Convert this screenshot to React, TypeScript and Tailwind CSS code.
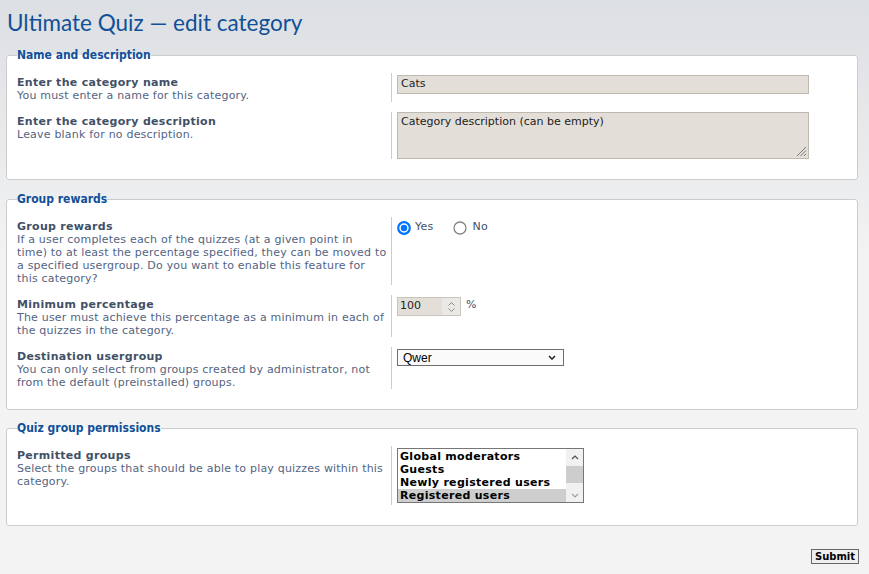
import React from "react";

const body = "font-['DejaVu_Sans',Verdana,sans-serif]";

function Row({
  label,
  lines,
  children,
  dd = "pt-[2px] pb-[2px]",
}: {
  label: string;
  lines: string[];
  children: React.ReactNode;
  dd?: string;
}) {
  return (
    <div className="flex">
      <div className="w-[374px] shrink-0 pt-[3px] text-[11px] leading-[13px] whitespace-nowrap">
        <div className="font-bold tracking-[0.3px] text-[#425067]">{label}</div>
        {lines.map((l, i) => (
          <div key={i} className="tracking-[0.2px] text-[#536482]">
            {l}
          </div>
        ))}
      </div>
      <div className={`flex-1 border-l border-[#cccccc] pl-[5px] ${dd}`}>{children}</div>
    </div>
  );
}

function Fieldset({ legend, children }: { legend: string; children: React.ReactNode }) {
  return (
    <fieldset className="ml-[6px] w-[852px] rounded-[3px] border border-[#cccccc] bg-white px-[10px] pt-[11px] pb-[20px]">
      <legend className="text-[12px] leading-[14px] font-bold text-[#115098] font-['DejaVu_Sans_Condensed','DejaVu_Sans',sans-serif]">
        {legend}
      </legend>
      <div className="flex flex-col gap-[10px]">{children}</div>
    </fieldset>
  );
}

function Radio({ checked }: { checked?: boolean }) {
  return (
    <svg width="14" height="14" viewBox="0 0 14 14" className="shrink-0">
      {checked ? (
        <>
          <circle cx="7" cy="7" r="5.8" fill="white" stroke="#0075ff" strokeWidth="2.2" />
          <circle cx="7" cy="7" r="3.2" fill="#0075ff" />
        </>
      ) : (
        <circle cx="7" cy="7" r="6" fill="white" stroke="#858585" strokeWidth="1.3" />
      )}
    </svg>
  );
}

export default function App() {
  return (
    <div className={`min-h-[574px] w-full bg-[linear-gradient(180deg,#dcdfe3_0px,#f3f3f3_260px)] ${body}`}>
      <h1 className="px-[7px] pt-[9px] text-[22.5px] leading-[27px] text-[#115098] font-['Lato',sans-serif]">
        Ultimate Quiz — edit category
      </h1>

      <div className="mt-[12px]">
        <Fieldset legend="Name and description">
          <Row label="Enter the category name" lines={["You must enter a name for this category."]}>
            <div className="flex h-[19px] w-[412px] items-center border border-[#bdb8b0] bg-[#e3dfd8] px-[3px] text-[11px] text-[#222]">
              Cats
            </div>
          </Row>
          <Row label="Enter the category description" lines={["Leave blank for no description."]} dd="">
            <div className="relative h-[47px] w-[412px] border border-[#bdb8b0] bg-[#e3dfd8] px-[3px] pt-[2px] text-[11px] leading-[13px] text-[#222]">
              Category description (can be empty)
              <svg width="11" height="11" viewBox="0 0 11 11" className="absolute right-[1px] bottom-[1px]">
                <line x1="10" y1="1" x2="1" y2="10" stroke="#7a7a7a" strokeWidth="1" />
                <line x1="10" y1="4.5" x2="4.5" y2="10" stroke="#7a7a7a" strokeWidth="1" />
                <line x1="10" y1="8" x2="8" y2="10" stroke="#7a7a7a" strokeWidth="1" />
              </svg>
            </div>
          </Row>
        </Fieldset>
      </div>

      <div className="mt-[12px]">
        <Fieldset legend="Group rewards">
          <Row
            label="Group rewards"
            lines={[
              "If a user completes each of the quizzes (at a given point in",
              "time) to at least the percentage specified, they can be moved to",
              "a specified usergroup. Do you want to enable this feature for",
              "this category?",
            ]}
          >
            <div className="mt-[2px] flex h-[13px] items-center text-[11px] tracking-[0.25px] text-[#425067]">
              <Radio checked />
              <span className="ml-[4px]">Yes</span>
              <span className="ml-[19px]">
                <Radio />
              </span>
              <span className="ml-[6px]">No</span>
            </div>
          </Row>
          <Row
            label="Minimum percentage"
            lines={["The user must achieve this percentage as a minimum in each of", "the quizzes in the category."]}
          >
            <div className="flex items-center">
              <div className="flex h-[19px] w-[64px] border border-[#c9c5bd] bg-[#e3dfd8]">
                <div className="flex flex-1 items-center pl-[2px] text-[11px] text-[#222]">100</div>
                <div className="flex w-[18px] flex-col items-center justify-center gap-[2px] bg-[#ebe9e6]">
                  <svg width="7" height="4" viewBox="0 0 7 4">
                    <path d="M0.5 3.5 L3.5 0.5 L6.5 3.5" fill="none" stroke="#8a8a8a" strokeWidth="1" />
                  </svg>
                  <svg width="7" height="4" viewBox="0 0 7 4">
                    <path d="M0.5 0.5 L3.5 3.5 L6.5 0.5" fill="none" stroke="#8a8a8a" strokeWidth="1" />
                  </svg>
                </div>
              </div>
              <span className="ml-[5px] -mt-[2px] text-[11px] text-[#425067]">%</span>
            </div>
          </Row>
          <Row
            label="Destination usergroup"
            lines={["You can only select from groups created by administrator, not", "from the default (preinstalled) groups."]}
          >
            <div className="flex h-[17px] w-[167px] items-center justify-between border border-[#6e6e6e] bg-[#fafafa] pl-[5px] pr-[7px] text-[12px] text-black font-['Liberation_Sans',Arial,sans-serif]">
              <span>Qwer</span>
              <svg width="8" height="5" viewBox="0 0 8 5">
                <path d="M1 1 L4 4 L7 1" fill="none" stroke="#111" strokeWidth="1.3" />
              </svg>
            </div>
          </Row>
        </Fieldset>
      </div>

      <div className="mt-[11px]">
        <Fieldset legend="Quiz group permissions">
          <Row
            label="Permitted groups"
            lines={["Select the groups that should be able to play quizzes within this", "category."]}
          >
            <div className="flex h-[55px] w-[187px] border border-[#767676] bg-white">
              <div className="flex-1 pt-[1px] text-[11px] leading-[13px] font-bold tracking-[0.3px] text-black">
                <div className="pl-[2px]">Global moderators</div>
                <div className="pl-[2px]">Guests</div>
                <div className="pl-[2px]">Newly registered users</div>
                <div className="bg-[#cecece] pl-[2px]">Registered users</div>
              </div>
              <div className="flex w-[17px] flex-col bg-[#f1f1f1]">
                <div className="flex h-[17px] items-center justify-center">
                  <svg width="8" height="5" viewBox="0 0 8 5">
                    <path d="M1 4 L4 1 L7 4" fill="none" stroke="#505050" strokeWidth="1.2" />
                  </svg>
                </div>
                <div className="h-[17px] bg-[#cdcdcd]" />
                <div className="flex-1" />
                <div className="flex h-[13px] items-center justify-center">
                  <svg width="8" height="5" viewBox="0 0 8 5">
                    <path d="M1 1 L4 4 L7 1" fill="none" stroke="#a0a0a0" strokeWidth="1.2" />
                  </svg>
                </div>
              </div>
            </div>
          </Row>
        </Fieldset>
      </div>

      <div className="ml-[6px] mt-[23px] flex w-[853px] justify-end pb-[10px]">
        <button className="h-[15px] w-[48px] border border-[#666] bg-[#efefef] text-[10px] leading-[13px] font-bold text-black">
          Submit
        </button>
      </div>
    </div>
  );
}
